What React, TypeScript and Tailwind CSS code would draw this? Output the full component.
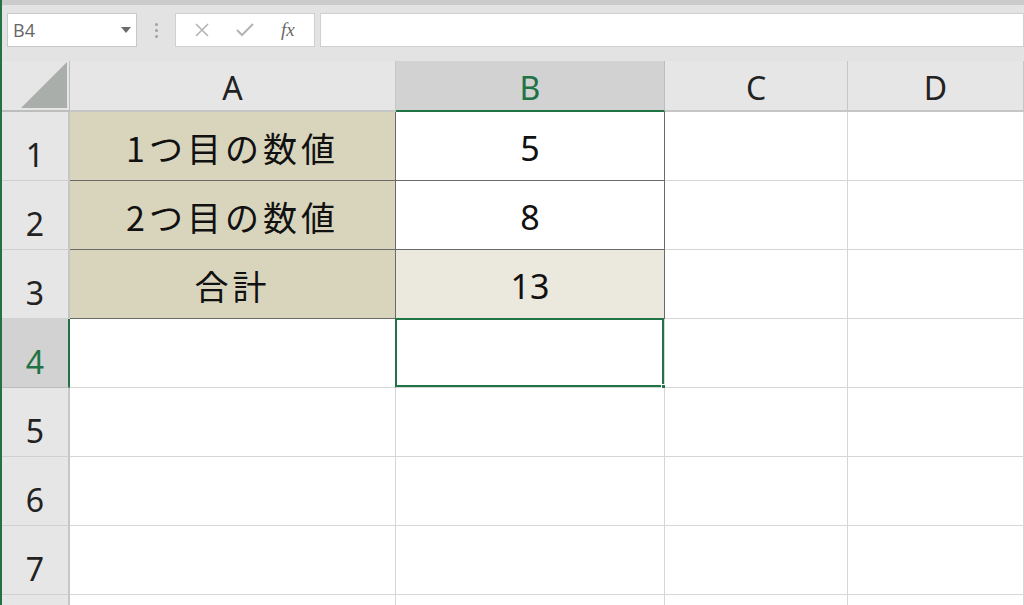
import React from "react";

const COLS = ["A", "B", "C", "D"];
const ROWS = [1, 2, 3, 4, 5, 6, 7, 8];

// cell content + style for the small table in A1:B3
const DATA: Record<string, { text: string; bg: string; cjk?: boolean }> = {
  A1: { text: "1つ目の数値", bg: "bg-[#d9d5bd]", cjk: true },
  B1: { text: "5", bg: "bg-white" },
  A2: { text: "2つ目の数値", bg: "bg-[#d9d5bd]", cjk: true },
  B2: { text: "8", bg: "bg-white" },
  A3: { text: "合計", bg: "bg-[#d9d5bd]", cjk: true },
  B3: { text: "13", bg: "bg-[#ebe8dd]" },
};

const uiFont = { fontFamily: '"Noto Sans", "Noto Sans CJK JP", sans-serif' };
const cjkFont = { fontFamily: '"Noto Sans CJK JP", "Noto Sans", sans-serif' };

export default function App() {
  return (
    <div className="w-[1024px] h-[605px] overflow-hidden bg-white flex flex-col border-l-2 border-[#217346]" style={uiFont}>
      {/* ── Formula bar ───────────────────────────── */}
      <div className="h-[61px] shrink-0 bg-[#e3e3e3] flex flex-col">
        <div className="h-[5px] bg-[#cbcbcb]" />
        <div className="flex items-center pt-[8px] gap-0">
          <div className="ml-[5px] w-[130px] h-[34px] bg-white border border-[#c8c8c8] flex items-center justify-between px-[5px]">
            <span className="text-[18px] text-[#666]" style={{ fontFamily: '"Open Sans", sans-serif' }}>B4</span>
            <svg width="10" height="6" viewBox="0 0 10 6"><path d="M0 0h10L5 6z" fill="#6b6b6b" /></svg>
          </div>
          <div className="w-[38px] flex flex-col items-center gap-[3px]">
            <span className="w-[3px] h-[3px] rounded-full bg-[#a0a0a0]" />
            <span className="w-[3px] h-[3px] rounded-full bg-[#a0a0a0]" />
            <span className="w-[3px] h-[3px] rounded-full bg-[#a0a0a0]" />
          </div>
          <div className="w-[140px] h-[34px] bg-white border border-[#d0d0d0] flex items-center justify-around px-[6px]">
            <svg width="14" height="14" viewBox="0 0 14 14"><path d="M1 1l12 12M13 1L1 13" stroke="#b4b4b4" strokeWidth="1.6" /></svg>
            <svg width="18" height="14" viewBox="0 0 18 14"><path d="M1 7l5 5L17 1" stroke="#b4b4b4" strokeWidth="2" fill="none" /></svg>
            <span className="text-[19px] italic text-[#6a6a6a]" style={{ fontFamily: '"Liberation Serif", serif' }}>fx</span>
          </div>
          <div className="ml-[5px] flex-1 h-[34px] bg-white border border-[#d0d0d0]" />
        </div>
      </div>

      {/* ── Grid ──────────────────────────────────── */}
      <div className="grid grid-cols-[68px_326px_269px_183px_1fr] grid-rows-[51px_repeat(8,69px)]">
        {/* corner */}
        <div className="bg-[#e6e6e6] border-r border-b-2 border-[#bdbdbd] relative">
          <svg className="absolute right-[2px] bottom-[2px]" width="46" height="46" viewBox="0 0 46 46">
            <path d="M46 0V46H0z" fill="#a9aeab" />
          </svg>
        </div>
        {COLS.map((c) => {
          const sel = c === "B";
          return (
            <div
              key={c}
              className={`flex items-center justify-center text-[32px] pt-[4px] border-r ${
                sel
                  ? "bg-[#d2d2d2] text-[#217346] border-b-2 border-b-[#217346] border-r-[#bdbdbd]"
                  : "bg-[#e6e6e6] text-[#222] border-b-2 border-b-[#c6c6c6] border-r-[#c6c6c6]"
              }`}
            >
              {c}
            </div>
          );
        })}

        {ROWS.map((r) => (
          <React.Fragment key={r}>
            <div
              className={`flex items-center justify-center text-[32px] pt-[18px] border-b ${
                r === 4
                  ? "bg-[#d2d2d2] text-[#217346] border-r-2 border-r-[#217346] border-b-[#bdbdbd]"
                  : "bg-[#e6e6e6] text-[#222] border-r-2 border-r-[#c6c6c6] border-b-[#d0d0d0]"
              }`}
            >
              {r < 8 ? r : null}
            </div>
            {COLS.map((c) => {
              const id = `${c}${r}`;
              const d = DATA[id];
              const inTable = r <= 3 && (c === "A" || c === "B");
              const selected = id === "B4";
              return (
                <div
                  key={id}
                  className={`relative flex items-center justify-center text-[34px] text-[#111] ${
                    d ? d.bg : "bg-white"
                  } border-r border-b ${
                    inTable ? "border-[#6a6a6a]" : c === "A" && r === 4 ? "border-r-[#6a6a6a] border-b-[#d6d6d6]" : "border-[#d6d6d6]"
                  }`}
                  style={d?.cjk ? cjkFont : undefined}
                >
                  {d && <span className={d.cjk ? "tracking-[4px] pt-[2px]" : "pt-[4px]"}>{d.text}</span>}
                  {selected && (
                    <>
                      <div className="absolute -left-px -top-px w-[calc(100%+1px)] h-[calc(100%+1px)] border-2 border-[#217346]" />
                      <div className="absolute -right-[3px] -bottom-[3px] w-[6px] h-[6px] bg-[#217346] border border-white" />
                    </>
                  )}
                </div>
              );
            })}
          </React.Fragment>
        ))}
      </div>
    </div>
  );
}
